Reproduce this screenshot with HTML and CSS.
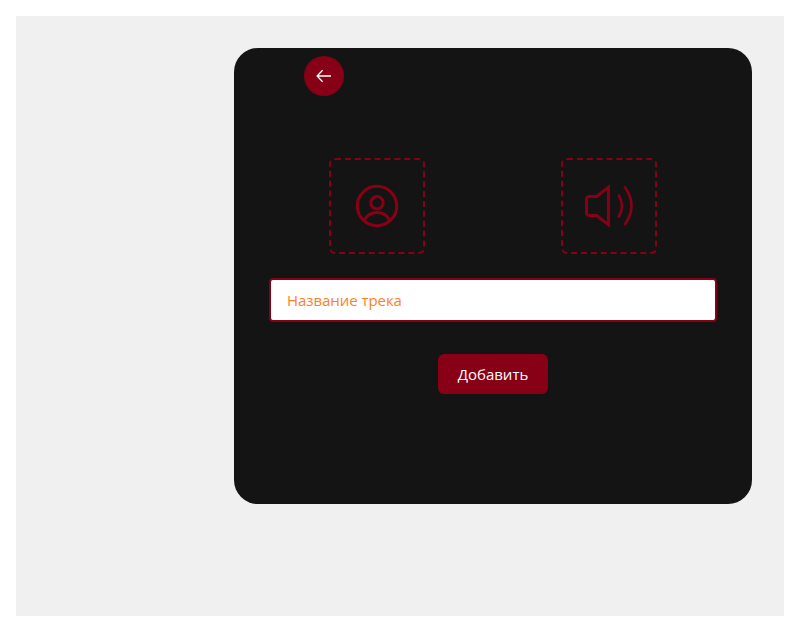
FILE: index.html
```html
<!DOCTYPE html>
<html lang="ru">
<head>
<meta charset="utf-8">
<title>Добавить трек</title>
<link rel="stylesheet" href="styles.css">
</head>
<body>
<main class="page">
  <form class="card">
    <button class="back" type="button" aria-label="Назад">
      <svg width="16" height="16" viewBox="0 0 16 16" fill="none" stroke="currentColor" stroke-width="1.3"><path d="M15 8H1.2M6.6 2.3 1.1 8l5.5 5.7"/></svg>
    </button>
    <div class="uploads">
      <div class="drop">
        <svg width="48" height="48" viewBox="0 0 48 48" fill="none" stroke="currentColor" stroke-width="3"><circle cx="24" cy="24" r="19.7"/><circle cx="24" cy="20.8" r="6.2"/><path d="M11 38.8C16 27.6 32 27.6 37 38.8"/></svg>
      </div>
      <div class="drop">
        <svg width="48" height="48" viewBox="0 0 48 48" fill="none" stroke="currentColor" stroke-width="3"><path d="M23.4 5.2V42.8L11.6 33.6H4.6Q1.6 33.6 1.6 31V17Q1.6 14.4 4.6 14.4H11.6Z"/><path d="M33.4 12.6Q40.6 24 33.4 35.6M39.4 4.6Q53.6 24 39.4 43.2" stroke-width="2.6"/></svg>
      </div>
    </div>
    <input class="field" type="text" placeholder="Название трека">
    <button class="submit" type="button">Добавить</button>
  </form>
</main>
</body>
</html>
```
FILE: styles.css
```css
* { box-sizing: border-box; }
body { margin: 16px; background: #fff; font-family: "Open Sans", "Noto Sans", sans-serif; }
.page { height: 600px; padding: 32px; background: #f0f0f0; display: flex; justify-content: flex-end; align-items: flex-start; }
.card { width: 518px; height: 456px; padding: 8px 35px; border-radius: 24px; background: #141414; display: flex; flex-direction: column; align-items: center; }
.back { align-self: flex-start; width: 40px; height: 40px; margin-left: 35px; padding: 0; border: 0; border-radius: 50%; background: #880015; color: #fff; display: flex; align-items: center; justify-content: center; }
.uploads { width: 100%; margin-top: 62px; padding: 0 60px; display: flex; justify-content: space-between; }
.drop { width: 96px; height: 96px; border: 2px dashed #880015; border-radius: 6px; color: #880015; display: flex; align-items: center; justify-content: center; }
.drop svg { overflow: visible; }
.field { width: 448px; height: 44px; margin-top: 24px; padding: 0 16px; border: 2px solid #880015; border-radius: 4px; background: #fff; font: 15px "Open Sans", "Noto Sans", sans-serif; letter-spacing: -0.06px; }
.field::placeholder { color: #ff7f27; opacity: 1; }
.submit { width: 110px; height: 40px; margin-top: 32px; padding: 0; border: 0; border-radius: 6px; background: #880015; color: #fff; font: 15px "Open Sans", "Noto Sans", sans-serif; }
```
